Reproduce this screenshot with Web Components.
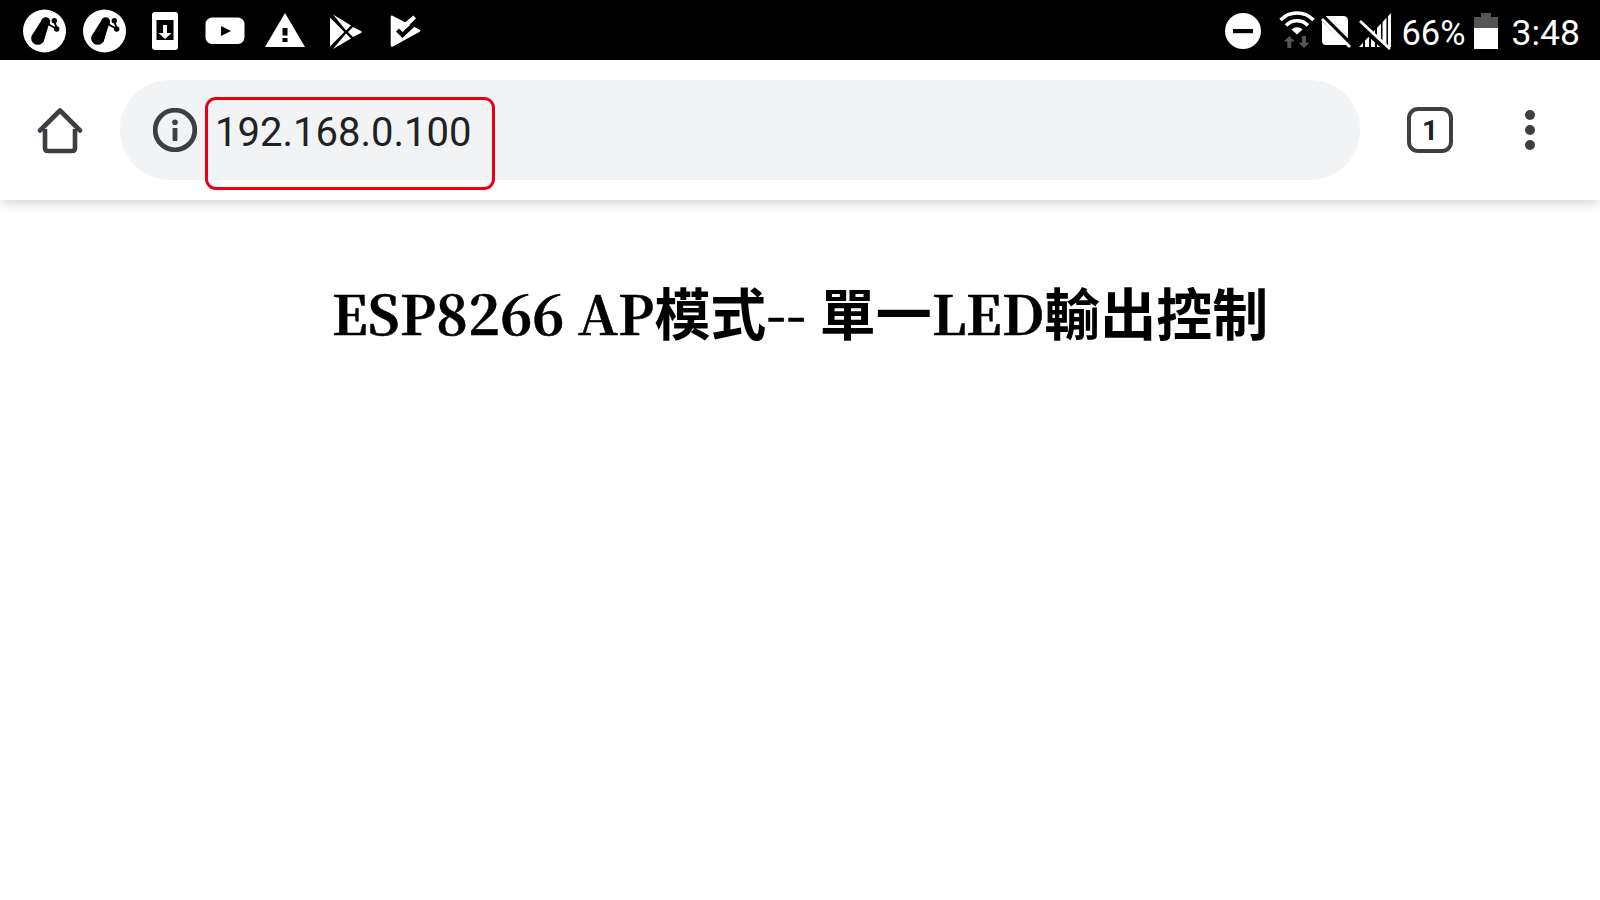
<!DOCTYPE html>
<html lang="zh-Hant">
<head>
<meta charset="utf-8">
<title>ESP8266</title>
<style>
html,body{margin:0;padding:0;background:#fff;height:100%}
body{display:flex;flex-direction:column;width:1600px;height:900px;overflow:hidden}
</style>
</head>
<body>
<status-bar></status-bar>
<browser-toolbar url="192.168.0.100" tabs="1"></browser-toolbar>
<page-content>ESP8266 AP<han-run>模式</han-run>-- <han-run>單一</han-run>LED<han-run>輸出控制</han-run></page-content>
<script>
const svg=(w,inner,h=60,extra='')=>`<svg width="${w}" height="${h}" viewBox="0 0 ${w} ${h}" ${extra}>${inner}</svg>`;
const share=`<circle cx="29.500" cy="31" r="21.500" fill="#fff"/><g fill="#000"><path d="M17.500 34.500 L27 19.500 L34 24 L28.500 42Z"/><circle cx="22.700" cy="38.300" r="6.500"/><circle cx="30.700" cy="21.700" r="4.500"/><circle cx="39.300" cy="20.700" r="2.700"/><circle cx="41.700" cy="29" r="2.700"/></g><path d="M33 24 L41.700 29 L39.300 20.700" fill="none" stroke="#000" stroke-width="2"/>`;
const leftIcons=[
 share,share,
 `<rect x="17" y="12" width="26" height="38" rx="3" fill="#fff"/><rect x="21.500" y="20" width="17" height="20" fill="#000"/><path d="M28 25h4v8h4.500L30 39 23.500 33H28z" fill="#fff"/>`,
 `<rect x="10.500" y="17.500" width="39" height="26.500" rx="6.500" fill="#fff"/><path d="M26 26l10 5-10 5z" fill="#000"/>`,
 `<path d="M30 13 L50 47 H10Z" fill="#fff"/><rect x="27.500" y="28" width="5" height="7.500" fill="#000"/><rect x="27.500" y="38" width="5" height="4" fill="#000"/>`,
 `<g fill="#fff"><path d="M15 17.500 L29.300 32 15 46.500Z"/><path d="M18 14.500 L36 25.500 31 30.500Z"/><path d="M18 49 L31 33.500 36 38.500Z"/><path d="M38 27 L46 31 Q47.500 32 46 33 L38 37 33 32Z"/></g>`,
 `<path d="M17 15.500 L44.700 29.700 Q46.300 30.700 44.700 31.800 L18 46.500 Q15.700 47.500 15.700 45 V17Q15.700 15 17 15.500Z" fill="#fff"/><path d="M28 24 L38.500 15.500 L41 18.500 L28 31Z" fill="#fff"/><path d="M22.500 30 L27.500 35 L46 17.500" fill="none" stroke="#000" stroke-width="4.300"/>`
];
class StatusBar extends HTMLElement{
 constructor(){super();const s=this.attachShadow({mode:'open'});
  s.innerHTML=`<style>
  :host{display:flex;flex:none;height:60px;background:#000;color:#fff;font:400 35.500px Roboto,sans-serif;justify-content:space-between;align-items:stretch}
  .l,.r{display:flex;align-items:stretch}
  .l{padding-left:15px}
  .r{padding-right:20px}
  svg{display:block;flex:none}
  .pct{font-size:34.500px;line-height:60px;margin-left:9px;padding-top:3px;height:57px}
  .time{line-height:60px;margin-left:14px;padding-top:3px;height:57px}
  .bat{margin-left:8px}
  </style>
  <div class="l">${leftIcons.map(i=>svg(60,i)).join('')}</div>
  <div class="r">
   ${svg(36,`<circle cx="18" cy="31" r="18" fill="#fff"/><rect x="8" y="29" width="20" height="4.200" fill="#000"/>`)}
   ${svg(36,`<g fill="none" stroke="#fff" stroke-width="3.400"><path d="M1.500 20 A23 23 0 0 1 34.500 20"/><path d="M7 25.500 A15 15 0 0 1 29 25.500"/></g><path d="M12.500 29.500 A8 8 0 0 1 23.500 29.500 L18 34.500Z" fill="#fff"/><path d="M10.300 36 L15.800 41.500 H12.300 V48 H8.300 V41.500 H4.800Z M25 48 L30.500 42.500 H27 V36 H23 V42.500 H19.500Z" fill="#555"/>`,60,'style="margin-left:18px"')}
   ${svg(34,`<path d="M7 16 H24 Q29 16 29 21 V40 L9 21Z M3 21 L28 45 H7 Q3 45 3 41Z" fill="#fff"/><path d="M3 19 L31 47" stroke="#fff" stroke-width="2.800"/><path d="M6.500 17.500 L32 43" stroke="#000" stroke-width="2.200"/>`,60,'style="margin-left:4px"')}
   ${svg(34,`<defs><clipPath id="sig"><path d="M1 47 L33 13 V47Z"/></clipPath></defs><g clip-path="url(#sig)" fill="#fff"><rect x="1" y="13" width="4" height="36"/><rect x="7" y="13" width="4" height="36"/><rect x="13" y="13" width="4" height="36"/><rect x="19" y="13" width="4" height="36"/><rect x="24.500" y="13" width="4" height="36"/><rect x="30" y="13" width="3" height="36"/></g><path d="M2 25 L30 50" stroke="#000" stroke-width="6"/><path d="M2 21 L32 49" stroke="#fff" stroke-width="2.800"/>`,60,'style="margin-left:5px"')}
   <span class="pct">66%</span>
   ${svg(24,`<path d="M7 13 H17 V17 H24 V28 H0 V17 H7Z" fill="#555"/><rect x="0" y="28" width="24" height="21" fill="#fff"/>`,60,'class="bat"')}
   <span class="time">3:48</span>
  </div>`;}
}
customElements.define('status-bar',StatusBar);

class UrlPill extends HTMLElement{
 static get observedAttributes(){return ['url']}
 constructor(){super();const s=this.attachShadow({mode:'open'});
  s.innerHTML=`<style>
  :host{display:flex;flex:1;height:100px;align-items:center;background:#f1f3f4;border-radius:50px;position:relative;padding-left:33px;box-sizing:border-box;color:#202124;font:400 40px Roboto,sans-serif}
  svg{display:block;flex:none}
  .t{margin-left:18px;margin-top:5px;line-height:50px}
  .mark{position:absolute;left:85px;top:17px;width:290px;height:93px;box-sizing:border-box;border:3px solid #e60012;border-radius:11px}
  </style>
  ${svg(44,`<circle cx="22" cy="22" r="19.800" fill="none" stroke="#3c4043" stroke-width="4.800"/><rect x="19.600" y="20" width="4.800" height="13" fill="#3c4043"/><circle cx="22" cy="14.300" r="2.800" fill="#3c4043"/>`,44)}
  <span class="t"></span><div class="mark"></div>`;}
 attributeChangedCallback(n,o,v){this.shadowRoot.querySelector('.t').textContent=v}
}
customElements.define('url-pill',UrlPill);

class BrowserToolbar extends HTMLElement{
 constructor(){super();const s=this.attachShadow({mode:'open'});
  const url=this.getAttribute('url'),tabs=this.getAttribute('tabs');
  s.innerHTML=`<style>
  :host{display:flex;flex:none;height:140px;background:#fff;align-items:center;padding-right:20px;box-sizing:border-box;box-shadow:0 2px 12px rgba(0,0,0,.2);position:relative}
  .cell{flex:none;width:100px;display:flex;align-items:center;justify-content:center}
  .home{width:120px}
  .tab{margin-left:20px}
  svg{display:block}
  .count{width:46px;height:46px;box-sizing:border-box;border:4.600px solid #3c4043;border-radius:11px;display:flex;align-items:center;justify-content:center;font:700 28px Roboto,sans-serif;color:#202124}
  </style>
  <div class="cell home">${svg(48,`<path d="M4 24.500 L24 4.500 L44 24.500" fill="none" stroke="#3c4043" stroke-width="4.600" stroke-linecap="round" stroke-linejoin="round"/><path d="M9 23 V42 Q9 45 12 45 H36 Q39 45 39 42 V23" fill="none" stroke="#3c4043" stroke-width="4.600"/>`,48)}</div>
  <url-pill url="${url}"></url-pill>
  <div class="cell tab"><div class="count">${tabs}</div></div>
  <div class="cell">${svg(10,`<circle cx="5" cy="5" r="5" fill="#3c4043"/><circle cx="5" cy="20" r="5" fill="#3c4043"/><circle cx="5" cy="35" r="5" fill="#3c4043"/>`,40)}</div>`;}
}
customElements.define('browser-toolbar',BrowserToolbar);

class HanRun extends HTMLElement{
 constructor(){super();const s=this.attachShadow({mode:'open'});
  s.innerHTML=`<style>:host{display:inline;font-family:"Noto Sans CJK TC",sans-serif;font-weight:700;font-size:56px;-webkit-text-stroke:0}</style><slot></slot>`;}
}
customElements.define('han-run',HanRun);

class PageContent extends HTMLElement{
 constructor(){super();const s=this.attachShadow({mode:'open'});
  s.innerHTML=`<style>
  :host{display:block;flex:1;background:#fff;padding-top:76px;text-align:center;color:#000}
  h1{margin:0;font:700 54px/70px "Noto Serif CJK TC","Liberation Serif",serif;-webkit-text-stroke:.5px #000}
  </style><h1><slot></slot></h1>`;}
}
customElements.define('page-content',PageContent);
</script>
</body>
</html>
